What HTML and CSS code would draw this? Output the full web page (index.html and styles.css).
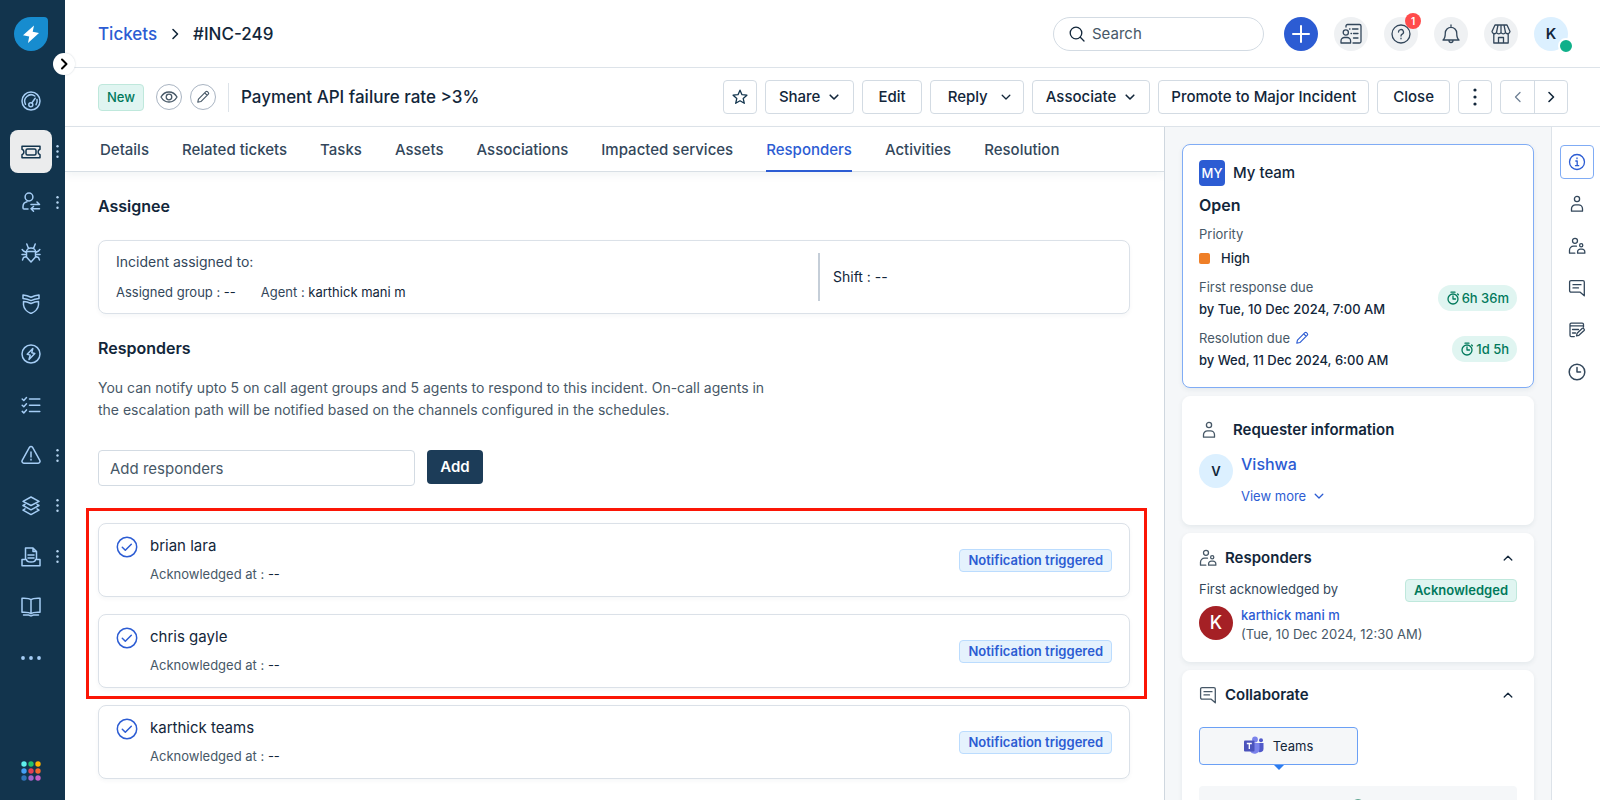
FILE: index.html
```html
<!DOCTYPE html>
<html lang="en">
<head>
<meta charset="utf-8">
<title>#INC-249 Payment API failure rate</title>
<link rel="stylesheet" href="styles.css">
</head>
<body>
<svg class="sprite" aria-hidden="true">
  <symbol id="person" viewBox="0 0 18 18"><circle cx="9" cy="4" r="2.6"/><path d="M3.500 16.200v-2.400a4 4 0 0 1 4-4h3a4 4 0 0 1 4 4v2.400z"/></symbol>
  <symbol id="people" viewBox="0 0 18 18"><circle cx="7" cy="3.800" r="2.500"/><path d="M6.800 16.200H1.500v-3a4 4 0 0 1 4-4h3"/><circle cx="13.200" cy="8.300" r="1.600"/><path d="M9.600 16.200v-1.400a2.700 2.700 0 0 1 2.700-2.700h1.800a2.700 2.700 0 0 1 2.700 2.700v1.400z"/></symbol>
  <symbol id="chat" viewBox="0 0 18 18"><path d="M16.300 16.800V3a1.400 1.400 0 0 0-1.400-1.400H3A1.400 1.400 0 0 0 1.600 3v8.800A1.400 1.400 0 0 0 3 13.200h9.200z"/><path d="M5 5.700h8M5 8.900h5.500"/></symbol>
  <symbol id="down" viewBox="0 0 12 12"><path d="M2.200 4.200 6 8l3.800-3.800"/></symbol>
  <symbol id="up" viewBox="0 0 12 12"><path d="M2.200 8 6 4.200 9.800 8"/></symbol>
  <symbol id="right" viewBox="0 0 12 12"><path d="M4 1.500 8.500 6 4 10.500"/></symbol>
  <symbol id="left" viewBox="0 0 12 12"><path d="M8 1.500 3.500 6 8 10.500"/></symbol>
  <symbol id="pencil" viewBox="0 0 16 16"><path d="M2 14l.8-3.600L11.300 1.900a1.300 1.300 0 0 1 1.800 0l1 1a1.300 1.300 0 0 1 0 1.800l-8.500 8.500zM10 3.300 12.700 6"/></symbol>
  <symbol id="kebab" viewBox="0 0 4 20"><g class="dot"><circle cx="2" cy="3" r="1.600"/><circle cx="2" cy="10" r="1.600"/><circle cx="2" cy="17" r="1.600"/></g></symbol>
  <symbol id="timer" viewBox="0 0 14 14"><circle cx="7" cy="8" r="5"/><path d="M5 1.200h4M7 5v3h2.500M11.600 3l.8.800"/></symbol>
  <symbol id="check" viewBox="0 0 22 22"><circle cx="11" cy="11" r="9.700"/><path d="M6.300 11.300l3 2.900 6-6"/></symbol>
</svg>
<div class="app">
  <aside class="sidebar">
    <a href="#" class="logo" aria-label="Home"><svg viewBox="0 0 34 34"><path class="logo-bg" d="M17 0h13a4 4 0 0 1 4 4v13A17 17 0 1 1 17 0z"/><path class="logo-bolt" d="M20 8.500 9 18.300l6.200 1.200L14 26l11-10-6.300-1.300z"/></svg></a>
    <button class="expand" aria-label="Expand menu"><svg class="ic s12 thick"><use href="#right"/></svg></button>
    <nav class="menu">
      <a href="#" aria-label="Dashboard"><svg class="ic s20" viewBox="0 0 20 20"><circle cx="10" cy="10" r="9"/><path d="M4.500 13.300A6.400 6.400 0 0 1 13.800 5M16 8.500a6.400 6.400 0 0 1-1 5.200"/><circle cx="9.800" cy="13.800" r="2"/><path d="M10.800 12l3.400-4.800"/></svg></a>
      <a href="#" aria-label="Tickets" class="active"><svg class="ic s20" viewBox="0 0 20 20"><path d="M1 4.200h18v3a3 3 0 0 0 0 5.600v3H1v-3a3 3 0 0 0 0-5.600z"/><rect x="5" y="7" width="10" height="6" rx="1.500"/></svg><svg class="more"><use href="#kebab"/></svg></a>
      <a href="#" aria-label="Requests"><svg class="ic s20" viewBox="0 0 20 20"><circle cx="8" cy="5" r="3.900"/><path d="M7 17H3a1 1 0 0 1-1-1v-1.500A5 5 0 0 1 6 9.700M10 12.500h8.500M16 10l2.500 2.500M18.500 16.800H10M12.500 19.200 10 16.800l2.500-2.300"/></svg><svg class="more"><use href="#kebab"/></svg></a>
      <a href="#" aria-label="Problems"><svg class="ic s20" viewBox="0 0 20 20"><path d="M5.500 8.500h9v5.500L10 19l-4.500-5zM5.500 8.500C5.500 6.500 7.500 5 10 5s4.500 1.500 4.500 3.500M7.500 5.500 5.800 1M12.500 5.500 14.200 1M5.500 9.500 2.500 8 1.200 6.500M5.500 11.500H1M5.500 13.500l-3 1L1.500 17M14.500 9.500l3-1.500 1.300-1.500M14.500 11.500H19M14.500 13.500l3 1 1 2.500"/></svg></a>
      <a href="#" aria-label="Changes"><svg class="ic s20" viewBox="0 0 20 20"><path d="M2 1c2.500.2 5.500 1 8 2.200C12.500 2 15.500 1.200 18 1v3.500c-2.500.2-5.500.9-8 2.100C7.500 5.400 4.500 4.700 2 4.500zM2.500 7.500c2.500 0 5 .8 7.500 2 2.500-1.200 5-2 7.500-2v3.500c-.5 4-4 7-7.500 8.500-3.500-1.500-7-4.500-7.500-8.500z"/></svg></a>
      <a href="#" aria-label="Alerts"><svg class="ic s20" viewBox="0 0 20 20"><circle cx="10" cy="10" r="9"/><path d="M11.800 4.500 6.200 10.300l3 .8L8 15.500l5.800-6-3-.8z"/></svg></a>
      <a href="#" aria-label="Tasks"><svg class="ic s20" viewBox="0 0 20 20"><path d="M1.200 4 2.800 5.500 5.500 2.500M1.200 10.200l1.600 1.500 2.700-3M1.200 16.400l1.600 1.500 2.700-3M8.500 4h10.300M8.500 10.200h10.300M8.500 16.400h10.300"/></svg></a>
      <a href="#" aria-label="Incidents"><svg class="ic s20" viewBox="0 0 20 20"><path d="M8.400 2.400a1.900 1.900 0 0 1 3.200 0l7.200 13a1.900 1.900 0 0 1-1.600 2.800H2.800a1.900 1.900 0 0 1-1.600-2.800zM10 7v5M10 14.300v.8"/></svg><svg class="more"><use href="#kebab"/></svg></a>
      <a href="#" aria-label="Assets"><svg class="ic s20" viewBox="0 0 20 20"><path d="M10 1l8 4.300-8 4.200-8-4.200zM4 8.300 2 9.500l8 4.300 8-4.300-2-1.200M4 12.800l-2 1.300 8 4.500 8-4.500-2-1.300"/></svg><svg class="more"><use href="#kebab"/></svg></a>
      <a href="#" aria-label="Contracts"><svg class="ic s20" viewBox="0 0 20 20"><path d="M4.500 12V1h7.500l3.500 3.500V12M12 1v3.500h3.500M7 8h6M7 11h6M1 12.500h4.500c0 2 2 2.500 4.500 2.500s4.500-.5 4.500-2.500H19v6.300H1z"/></svg><svg class="more"><use href="#kebab"/></svg></a>
      <a href="#" aria-label="Knowledge base"><svg class="ic s20" viewBox="0 0 20 20"><path d="M10 2.800C8.500 1.300 5 1 1 1.200v14c4-.2 7.500 0 9 1.500 1.500-1.500 5-1.700 9-1.500v-14c-4-.2-7.500.1-9 1.600zM10 2.800v13.500M2.500 18h5c1 0 2 1 2.500 1s1.500-1 2.500-1h5"/></svg></a>
      <a href="#" aria-label="More"><svg class="s20" viewBox="0 0 20 20"><g class="dot"><circle cx="2" cy="10" r="1.900"/><circle cx="10" cy="10" r="1.900"/><circle cx="18" cy="10" r="1.900"/></g></svg></a>
    </nav>
    <button class="apps" aria-label="Switch apps"><svg class="s20" viewBox="0 0 20 20"><circle cx="3" cy="3" r="2.700" fill="#5ff0ee"/><circle cx="10" cy="3" r="2.700" fill="#22c06b"/><circle cx="17" cy="3" r="2.700" fill="#ffb400"/><circle cx="3" cy="10" r="2.700" fill="#45a0f5"/><circle cx="10" cy="10" r="2.700" fill="#e43f54"/><circle cx="17" cy="10" r="2.700" fill="#f2672e"/><circle cx="3" cy="17" r="2.700" fill="#2f74b8"/><circle cx="10" cy="17" r="2.700" fill="#a265cc"/><circle cx="17" cy="17" r="2.700" fill="#c85fc6"/></svg></button>
  </aside>

  <div class="page">
    <header class="topbar">
      <nav class="crumbs"><a href="#">Tickets</a><svg class="ic s12 thick"><use href="#right"/></svg><span>#INC-249</span></nav>
      <label class="search"><svg class="ic s16" viewBox="0 0 16 16"><circle cx="7" cy="7" r="5.800"/><path d="M11.300 11.300 15 15"/></svg><input type="text" placeholder="Search" aria-label="Search"></label>
      <div class="top-actions">
        <button class="round primary" aria-label="Create"><svg class="ic s18" viewBox="0 0 18 18"><path d="M9 1v16M1 9h16"/></svg></button>
        <button class="round" aria-label="Contacts"><svg class="ic s22" viewBox="0 0 22 22"><path d="M6 4V3a1.500 1.500 0 0 1 1.500-1.500H19.500A1.500 1.500 0 0 1 21 3v15.500a1.500 1.500 0 0 1-1.500 1.500H13M9.500 6h.5M12.500 6h5.500M11 10.500h.5M13.500 10.500H18M13.500 15H18"/><circle cx="5.800" cy="9.500" r="2.600"/><path d="M1 20v-2a3.500 3.500 0 0 1 3.500-3.500h2.600a3.500 3.500 0 0 1 3.500 3.500v2z"/></svg></button>
        <button class="round" aria-label="Help"><svg class="ic s20" viewBox="0 0 20 20"><circle cx="10" cy="10" r="9"/><path d="M7.500 8a2.500 2.500 0 1 1 3.700 2.200c-.8.4-1.200.9-1.200 1.800M10 14.200v.6"/></svg><span class="count">1</span></button>
        <button class="round" aria-label="Notifications"><svg class="ic s20" viewBox="0 0 20 20"><path d="M10 1v1.500M2 16c2-1.500 2.300-3.500 2.300-7a5.700 5.700 0 0 1 11.400 0c0 3.500.3 5.500 2.300 7zM8 16.500a2 2 0 0 0 4 0"/></svg></button>
        <button class="round" aria-label="Marketplace"><svg class="ic s20" viewBox="0 0 20 20"><path d="M4 1h12l3 6.500a2.500 2.500 0 0 1-4.500 1.200 2.700 2.700 0 0 1-4.500 0 2.700 2.700 0 0 1-4.500 0A2.500 2.500 0 0 1 1 7.500zM7 1 5.500 8.500M13 1l1.500 7.500M10 1v7.500M2.800 10v9h14.400v-9M7.500 19v-5.500h5V19"/></svg></button>
        <button class="round me" aria-label="Profile">K<span class="status"></span></button>
      </div>
    </header>

    <div class="toolbar">
      <span class="tag green state">New</span>
      <button class="ring" aria-label="Watch"><svg class="ic s18" viewBox="0 0 18 18"><path d="M1 9c2-3.500 5-5 8-5s6 1.500 8 5c-2 3.500-5 5-8 5s-6-1.500-8-5z"/><circle cx="9" cy="9" r="2.800"/></svg></button>
      <button class="ring" aria-label="Edit subject"><svg class="ic s14"><use href="#pencil"/></svg></button>
      <h1>Payment API failure rate &gt;3%</h1>
      <div class="actions">
        <button class="btn square" aria-label="Star"><svg class="ic s16 navy" viewBox="0 0 16 16"><path d="M8 1.200l2 4.500 4.900.5-3.700 3.200 1.100 4.900L8 11.800l-4.300 2.500 1.100-4.900L1.100 6.200 6 5.700z"/></svg></button>
        <button class="btn drop">Share <svg class="ic s12 thick"><use href="#down"/></svg></button>
        <button class="btn wide">Edit</button>
        <button class="btn reply">Reply <svg class="ic s12"><use href="#down"/></svg></button>
        <button class="btn drop">Associate <svg class="ic s12 thick"><use href="#down"/></svg></button>
        <button class="btn">Promote to Major Incident</button>
        <button class="btn wide">Close</button>
        <button class="btn square" aria-label="More actions"><svg class="kebab"><use href="#kebab"/></svg></button>
        <div class="pager"><button aria-label="Previous" class="dim"><svg class="ic s12"><use href="#left"/></svg></button><button aria-label="Next"><svg class="ic s12 thick"><use href="#right"/></svg></button></div>
      </div>
    </div>

    <div class="body">
      <main>
        <nav class="tabs">
          <a href="#">Details</a><a href="#">Related tickets</a><a href="#">Tasks</a><a href="#">Assets</a><a href="#">Associations</a><a href="#">Impacted services</a><a href="#" class="on">Responders</a><a href="#">Activities</a><a href="#">Resolution</a>
        </nav>
        <div class="content">
          <h2>Assignee</h2>
          <section class="card assignee">
            <div class="who"><p>Incident assigned to:</p><div class="pair"><span>Assigned group : <b>--</b></span><span>Agent : <b>karthick mani m</b></span></div></div>
            <p class="shift">Shift : --</p>
          </section>
          <h2>Responders</h2>
          <p class="hint">You can notify upto 5 on call agent groups and 5 agents to respond to this incident. On-call agents in the escalation path will be notified based on the channels configured in the schedules.</p>
          <form class="add"><input type="text" placeholder="Add responders" aria-label="Add responders"><button type="button">Add</button></form>
          <div class="marked">
            <article class="card row"><svg class="ic check"><use href="#check"/></svg><div class="info"><h3>brian lara</h3><p>Acknowledged at : <b>--</b></p></div><span class="tag blue">Notification triggered</span></article>
            <article class="card row"><svg class="ic check"><use href="#check"/></svg><div class="info"><h3>chris gayle</h3><p>Acknowledged at : <b>--</b></p></div><span class="tag blue">Notification triggered</span></article>
          </div>
          <article class="card row"><svg class="ic check"><use href="#check"/></svg><div class="info"><h3>karthick teams</h3><p>Acknowledged at : <b>--</b></p></div><span class="tag blue">Notification triggered</span></article>
        </div>
      </main>

      <aside class="panel">
        <section class="box summary">
          <div class="team"><span class="my">MY</span>My team</div>
          <h2>Open</h2>
          <p class="label">Priority</p>
          <p class="priority"><i></i>High</p>
          <div class="due"><div><p class="label">First response due</p><p>by Tue, 10 Dec 2024, 7:00 AM</p></div><span class="pill"><svg class="ic s14"><use href="#timer"/></svg>6h 36m</span></div>
          <div class="due"><div><p class="label">Resolution due <svg class="ic s14 link"><use href="#pencil"/></svg></p><p>by Wed, 11 Dec 2024, 6:00 AM</p></div><span class="pill"><svg class="ic s14"><use href="#timer"/></svg>1d 5h</span></div>
        </section>
        <section class="box requester">
          <h3><svg class="ic s18"><use href="#person"/></svg>Requester information</h3>
          <div class="person"><span class="avatar pale">V</span><div><a href="#" class="name">Vishwa</a><button class="view">View more <svg class="ic s12"><use href="#down"/></svg></button></div></div>
        </section>
        <section class="box responders">
          <h3><svg class="ic s18"><use href="#people"/></svg>Responders<button class="fold" aria-label="Collapse"><svg class="ic s12"><use href="#up"/></svg></button></h3>
          <div class="ack"><span>First acknowledged by</span><span class="tag green">Acknowledged</span></div>
          <div class="person"><span class="avatar red">K</span><div><a href="#">karthick mani m</a><p>(Tue, 10 Dec 2024, 12:30 AM)</p></div></div>
        </section>
        <section class="box collab">
          <h3><svg class="ic s18"><use href="#chat"/></svg>Collaborate<button class="fold" aria-label="Collapse"><svg class="ic s12"><use href="#up"/></svg></button></h3>
          <button class="teams"><svg class="s20" viewBox="0 0 20 20"><circle cx="11" cy="3.500" r="2.900" fill="#7b83eb"/><circle cx="17" cy="4.200" r="2" fill="#5059c9"/><path d="M13 7h6.500v6a3.300 3.300 0 0 1-5 2.800z" fill="#5059c9"/><path d="M6 7h9.500v6a5 5 0 0 1-9.500 2z" fill="#7b83eb"/><rect x="0" y="4.500" width="10.500" height="11" rx="1" fill="#4b53bc"/><path d="M2.800 7.500h5M5.300 7.500v5.500" stroke="#fff" stroke-width="1.300"/></svg>Teams</button>
          <div class="thread"><svg class="ic s20" viewBox="0 0 20 20"><circle cx="10" cy="10" r="8"/></svg></div>
        </section>
      </aside>

      <nav class="rail">
        <button class="on" aria-label="Info"><svg class="ic s18" viewBox="0 0 18 18"><circle cx="9" cy="9" r="7.500"/><path d="M7.800 8H9.200v4.500M7.500 12.700h3.200M9 5v.7"/></svg></button>
        <button aria-label="Requester"><svg class="ic s18"><use href="#person"/></svg></button>
        <button aria-label="Responders"><svg class="ic s18"><use href="#people"/></svg></button>
        <button aria-label="Collaborate"><svg class="ic s18"><use href="#chat"/></svg></button>
        <button aria-label="Notes"><svg class="ic s18" viewBox="0 0 18 18"><path d="M15.500 6V3.500a1.300 1.300 0 0 0-1.300-1.300H3.300A1.300 1.300 0 0 0 2 3.500v10.800a1.300 1.300 0 0 0 1.300 1.300h3M2 4.800h13.500M4.500 8.500h6M4.500 12h3M8.500 14.800l.6-2.500 5-4.800a1 1 0 0 1 1.400 0l.6.600a1 1 0 0 1 0 1.400l-5.200 4.800z"/></svg></button>
        <button aria-label="Time"><svg class="ic s18 clock" viewBox="0 0 18 18"><circle cx="9" cy="9" r="7.800"/><path d="M9 4.500V9h3.500"/></svg></button>
      </nav>
    </div>
  </div>
</div>
</body>
</html>
```
FILE: styles.css
```css
* { box-sizing: border-box; }
body, h1, h2, h3, p { margin: 0; }
body { font: 14px/20px Inter, "Liberation Sans", sans-serif; color: #12263a; background: #fff; overflow: hidden; }
button, input { font: inherit; color: inherit; }
button { border: 0; background: none; padding: 0; display: flex; align-items: center; justify-content: center; }
a { color: #2c5cd3; text-decoration: none; }
b { font-weight: 400; color: #12263a; }
.sprite { position: absolute; width: 0; height: 0; }
.ic { fill: none; stroke: currentColor; stroke-width: 1.3; stroke-linecap: round; stroke-linejoin: round; }
svg { flex: none; }
.dot { fill: currentColor; stroke: none; }
.thick { stroke-width: 1.6; }
.navy { color: #12344d; }
.s12 { width: 12px; height: 12px; }
.s14 { width: 14px; height: 14px; }
.s16 { width: 16px; height: 16px; }
.s18 { width: 18px; height: 18px; }
.s20 { width: 20px; height: 20px; }
.s22 { width: 22px; height: 22px; }

.app { display: flex; height: 100vh; }
.page { flex: 1; min-width: 0; display: flex; flex-direction: column; }

.sidebar { width: 65px; background: #12344d; display: flex; flex-direction: column; position: relative; color: #a5cdf5; z-index: 1; }
.logo { padding: 17px 14px 0; height: 76px; }
.logo svg { width: 34px; height: 34px; }
.logo-bg { fill: #178ccf; }
.logo-bolt { fill: #fff; }
.expand { position: absolute; left: 53px; top: 53px; width: 22px; height: 22px; border-radius: 50%; background: #fff; color: #000; box-shadow: 0 0 2px rgba(18, 52, 77, .2); }
.expand .ic { stroke-width: 2; }
.menu { flex: 1; display: grid; grid-auto-rows: 1fr; align-items: center; }
.menu .ic { stroke-width: 1.5; }
.menu a { position: relative; margin-left: 10px; width: 42px; height: 43px; border-radius: 8px; display: flex; align-items: center; justify-content: center; color: inherit; }
.menu .active { background: #ebeced; color: #12344d; }
.menu .more { position: absolute; left: 46px; top: 14px; width: 3px; height: 15px; color: #b5d4f0; }
.apps { height: 39px; margin-top: 78px; padding: 0 24px 0 21px; align-items: flex-start; }

.topbar { display: flex; align-items: center; height: 68px; padding: 0 32px 0 33px; border-bottom: 1px solid #dde3e9; }
.crumbs { flex: 1; display: flex; align-items: center; gap: 12px; font-size: 17px; font-weight: 500; }
.search { display: flex; align-items: center; gap: 7px; width: 211px; height: 34px; padding: 0 15px; border: 1px solid #d3dbe3; border-radius: 17px; }
.search input { border: 0; padding: 0; width: 100%; outline: 0; background: none; font-size: 15px; }
::placeholder { color: #475867; opacity: 1; }
.top-actions { display: flex; gap: 16px; margin-left: 20px; }
.round { position: relative; width: 34px; height: 34px; border-radius: 50%; background: #eff1f3; color: #33475b; }
.round.primary { background: #2c5cd3; color: #fff; }
.primary .ic { stroke-width: 2; }
.round.me { background: #dcf0ff; color: #12263a; font-weight: 600; font-size: 15px; }
.count { position: absolute; top: -4px; right: -3px; width: 16px; height: 16px; border-radius: 50%; background: #ff4b4b; color: #fff; font-size: 10px; line-height: 16px; font-weight: 600; }
.status { position: absolute; right: -6px; bottom: -3px; width: 16px; height: 16px; border-radius: 50%; background: #10b08a; border: 2px solid #fff; }

.toolbar { display: flex; align-items: center; height: 59px; padding: 0 32px 0 33px; border-bottom: 1px solid #dde3e9; }
.tag { border: 1px solid; border-radius: 4px; padding: 0 8px; font-weight: 600; font-size: 13px; line-height: 21px; }
.green { background: #e0f5f1; border-color: #bfe8dc; color: #00795b; }
.blue { background: #e5f2fd; border-color: #bbdcfe; color: #2c5cd3; }
.state { font-weight: 500; line-height: 25px; }
.ring { width: 26px; height: 26px; border: 1px solid #a9b4c2; border-radius: 50%; margin-left: 8px; color: #475867; }
.state + .ring { margin-left: 12px; }
h1 { margin-left: 12px; padding-left: 12px; border-left: 1px solid #dde3e9; font-size: 17px; line-height: 29px; font-weight: 500; flex: 1; white-space: nowrap; }
.actions { display: flex; gap: 8px; }
.btn { height: 34px; padding: 0 12px; gap: 8px; border: 1px solid #d3dbe3; border-radius: 4px; background: #fff; font-size: 15px; font-weight: 500; white-space: nowrap; }
.btn.square { width: 34px; padding: 0; }
.btn.drop { padding: 0 13px; }
.btn.wide { padding: 0 15px; }
.btn.reply { padding: 0 11px 0 17px; gap: 12px; }
.kebab { width: 4px; height: 20px; }
.pager { display: flex; border: 1px solid #d3dbe3; border-radius: 4px; }
.pager button { width: 33px; height: 32px; }
.pager button + button { border-left: 1px solid #d3dbe3; }
.dim { color: #6f8095; }

.body { flex: 1; min-height: 0; display: flex; }
main { flex: 1; min-width: 0; }
.tabs { display: flex; gap: 33px; padding: 0 35px; height: 45px; border-bottom: 1px solid #d8dfe5; box-shadow: 0 4px 8px rgba(18, 52, 77, .05); }
.tabs a { height: 45px; line-height: 46px; font-size: 15px; font-weight: 500; color: #33475b; white-space: nowrap; }
.tabs .on { color: #2c5cd3; border-bottom: 2px solid #2c5cd3; }
.content { padding: 22px 34px 0 33px; }
h2 { font-size: 16px; line-height: 24px; font-weight: 600; }
.card { border: 1px solid #dbe1e8; border-radius: 8px; box-shadow: 0 2px 4px rgba(18, 52, 77, .04); background: #fff; }
.assignee { display: flex; align-items: center; height: 74px; margin: 22px 0; padding: 0 17px; }
.who { flex: 1; color: #33475b; }
.pair { display: flex; gap: 25px; margin-top: 10px; font-size: 13px; }
.shift { flex: 0 0 294px; border-left: 2px solid #c5ced8; padding-left: 13px; line-height: 48px; }
.hint { max-width: 685px; margin-top: 17px; font-size: 14px; line-height: 22px; color: #475867; }
.add { display: flex; gap: 12px; margin: 29px 0 22px; }
.add input { width: 317px; height: 36px; padding: 0 11px; border: 1px solid #d3dbe3; border-radius: 4px; font-size: 15px; }
.add button { width: 56px; height: 34px; border-radius: 4px; background: #1c3c58; color: #fff; font-size: 15px; font-weight: 600; }
.marked { display: grid; gap: 17px; margin: 0 -17px 6px -12px; padding: 12px 14px 8px 9px; border: 3px solid #fb1606; }
.row { display: flex; align-items: center; height: 74px; padding: 0 17px; }
.check { width: 22px; height: 22px; align-self: flex-start; margin-top: 12px; color: #2c5cd3; stroke-width: 1.5; }
.info { flex: 1; margin-left: 12px; }
.info h3 { font-size: 15px; font-weight: 400; }
.info p { margin-top: 8px; font-size: 13px; color: #475867; }

.panel { width: 388px; padding: 17px 17px 0; background: #f5f7f9; border-left: 1px solid #cfd7df; border-right: 1px solid #dde3e9; overflow: hidden; display: flex; flex-direction: column; gap: 8px; font-size: 13px; }
.box { background: #fff; border: 1px solid #fff; border-radius: 8px; padding: 16px; flex: none; box-shadow: 0 2px 5px rgba(18, 52, 77, .07); }
.summary { border-color: #80acf5; height: 244px; padding-top: 15px; }
.team { display: flex; align-items: center; gap: 8px; font-size: 15px; font-weight: 500; }
.my { width: 26px; height: 26px; border-radius: 4px; background: #2c5cd3; color: #fff; font-size: 13px; font-weight: 500; line-height: 26px; text-align: center; }
.summary h2 { margin: 7px 0; }
.label { color: #475867; }
.priority { display: flex; align-items: center; gap: 11px; margin: 4px 0 9px; font-weight: 500; }
.priority i { width: 11px; height: 11px; border-radius: 2px; background: #ef7f27; }
.due { display: flex; align-items: center; justify-content: space-between; font-weight: 500; }
.due + .due { margin-top: 9px; }
.due .label { font-weight: 400; margin-bottom: 2px; display: flex; align-items: center; gap: 5px; }
.link { color: #2c5cd3; }
.pill { display: flex; align-items: center; gap: 2px; height: 26px; padding: 0 8px; border-radius: 13px; background: #e0f5f1; color: #00795b; }
.box h3 { display: flex; align-items: center; gap: 8px; font-size: 15px; font-weight: 600; line-height: 20px; }
.box h3 .s18 { color: #475867; }
.requester { height: 129px; padding-top: 23px; }
.requester h3 { padding-left: 1px; gap: 15px; }
.person { display: flex; gap: 8px; }
.requester .person { margin-top: 14px; }
.avatar { width: 34px; height: 34px; border-radius: 50%; text-align: center; line-height: 34px; }
.pale { background: #dcf0ff; font-weight: 600; }
.red { background: #a52025; color: #fff; font-size: 18px; font-weight: 500; }
.name { display: block; font-size: 16px; font-weight: 500; line-height: 20px; }
.view { margin-top: 12px; gap: 7px; color: #2c5cd3; }
.responders { height: 129px; padding-top: 14px; }
.fold { margin-left: auto; margin-right: 3px; }
.ack { display: flex; justify-content: space-between; margin-top: 11px; color: #33475b; }
.responders .person { margin-top: 4px; line-height: 19px; }
.responders .person a { font-weight: 500; }
.responders .person p { color: #475867; }
.collab { padding-top: 14px; }
.teams { position: relative; width: 50%; height: 38px; margin-top: 22px; gap: 9px; border: 1px solid #6ba0f5; border-radius: 4px; background: #f5f7f9; }
.teams::after { content: ""; position: absolute; top: 37px; left: 50%; margin-left: -5px; border: 5px solid transparent; border-top-color: #2c7df0; border-bottom: 0; }
.thread { height: 60px; margin-top: 21px; padding-top: 12px; border-radius: 4px; background: #f5f7f9; display: flex; justify-content: center; color: #2d8a6e; }

.rail { width: 48px; padding: 18px 6px 0 8px; display: flex; flex-direction: column; gap: 8px; color: #33475b; }
.rail button { width: 34px; height: 34px; }
.rail .on { border: 1px solid #80acf5; border-radius: 4px; color: #2c5cd3; }
.rail .clock { stroke-width: 1.5; }
```
